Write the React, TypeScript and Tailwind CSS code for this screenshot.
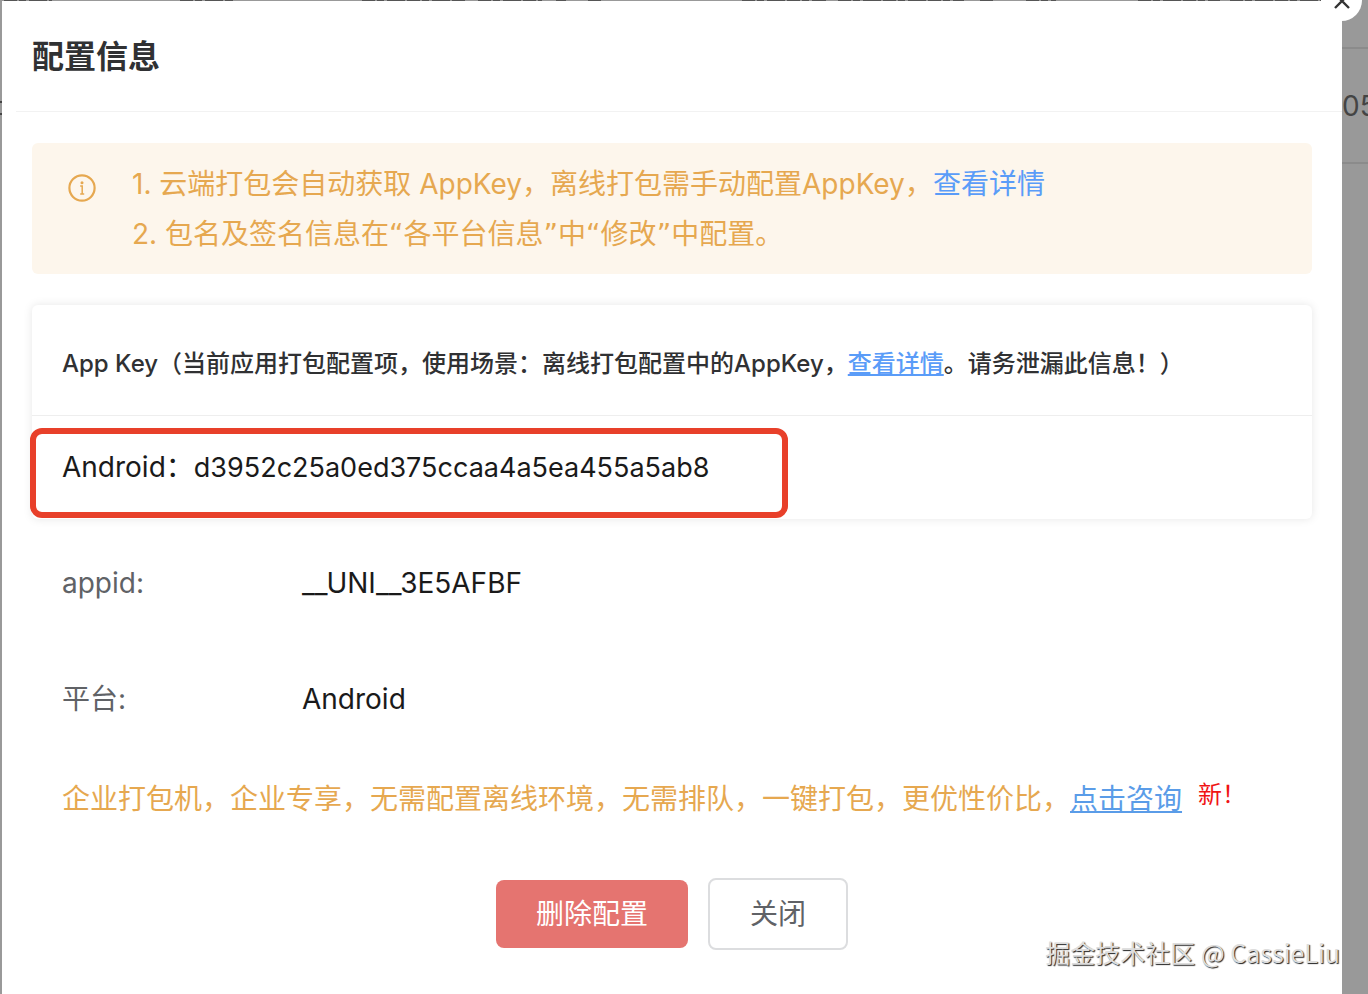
import type { ReactNode } from "react";

interface ChildrenProps {
  children: ReactNode;
}

interface FieldRowProps extends ChildrenProps {
  label: string;
}

const FieldRow = ({ label, children }: FieldRowProps) => (
  <div className="flex h-[116px] items-center px-[30px] text-[28px]">
    <dt className="w-60 shrink-0 text-[#606266]">{label}</dt>
    <dd className="text-[#1a1a1a]">{children}</dd>
  </div>
);

// wider quote marks than the ones in Inter
const Quoted = ({ children }: ChildrenProps) => (
  <>
    <span className="font-['DejaVu_Sans',sans-serif]">“</span>
    {children}
    <span className="font-['DejaVu_Sans',sans-serif]">”</span>
  </>
);

const InfoIcon = () => (
  <svg viewBox="0 0 28 28" className="mt-[15px] size-7 shrink-0" fill="none">
    <circle cx="14" cy="14" r="12.6" stroke="#e6a850" strokeWidth="2.2" />
    <circle cx="14" cy="8.8" r="1.5" fill="#e6a850" />
    <path
      d="M12.2 12H14.2V19.8M12.2 20H16.2"
      stroke="#e6a850"
      strokeWidth="1.5"
    />
  </svg>
);

// bottom edge of the table row that stays visible above the dialog
const Backdrop = () => (
  <svg className="h-px w-full" preserveAspectRatio="none" viewBox="0 0 1368 1">
    <path
      d="M4 .5H52M180 .5H233M362 .5H466M478 .5H542M556 .5H566M588 .5H602M742 .5H826M838 .5H964M980 .5H994M1026 .5H1056M1138 .5H1220M1230 .5H1322"
      stroke="#555"
      strokeDasharray="13 2 7 3 18 2"
    />
  </svg>
);

const App = () => {
  return (
    <div className="relative flex min-h-screen flex-col overflow-hidden bg-[#999] font-['Inter','Noto_Sans_CJK_SC',sans-serif]">
      <Backdrop />
      <div className="flex flex-1">
        <div className="w-0.5 shrink-0 pt-[100px]">
          <div className="h-3.5 border-y-2 border-[#444]" />
        </div>

        <section
          role="dialog"
          aria-labelledby="dialog-title"
          className="relative flex min-w-0 flex-1 flex-col bg-white"
        >
          <header className="ml-3.5 flex h-[111px] items-center border-b border-[#f2f2f2] px-4 pt-0.5">
            <h1
              id="dialog-title"
              className="text-[32px] font-bold text-[#303133]"
            >
              配置信息
            </h1>
          </header>

          <button
            type="button"
            aria-label="关闭弹窗"
            className="absolute -top-[21px] -right-5 flex size-[41px] items-center justify-center rounded-full bg-white"
          >
            <svg
              viewBox="0 0 16 16"
              className="size-4"
              fill="none"
              stroke="#333"
              strokeWidth="2.4"
            >
              <path d="M1 1L15 15M15 1L1 15" />
            </svg>
          </button>

          <main className="px-[30px] pt-[31px]">
            <div className="flex rounded-md bg-[#fdf6ec] pt-4 pr-8 pb-3.5 pl-9 text-[28px] leading-[50px] text-[#e6a850]">
              <InfoIcon />
              <div className="ml-9">
                <p>
                  1. 云端打包会自动获取 AppKey，离线打包需手动配置AppKey，
                  <a href="#appkey" className="text-[#5a9cf8]">
                    查看详情
                  </a>
                </p>
                <p>
                  2. 包名及签名信息在<Quoted>各平台信息</Quoted>中
                  <Quoted>修改</Quoted>中配置。
                </p>
              </div>
            </div>

            <div className="mt-[31px] rounded-md shadow-[0_0_10px_rgba(0,0,0,0.1)]">
              <h2 className="flex h-[111px] items-center border-b border-[#eee] px-[30px] pt-2 text-[24px] font-medium text-[#303133]">
                <span>
                  App Key（当前应用打包配置项，使用场景：离线打包配置中的AppKey，
                  <a href="#appkey" className="text-[#5a9cf8] underline">
                    查看详情
                  </a>
                  。请务泄漏此信息！）
                </span>
              </h2>
              <div className="relative px-[30px] py-[30px] text-[28px] leading-[42px] text-[#1a1a1a]">
                Android：
                <span className="text-[27px]">
                  d3952c25a0ed375ccaa4a5ea455a5ab8
                </span>
                <div className="absolute top-3 -left-0.5 h-[90px] w-[758px] rounded-xl border-6 border-[#e8402a]" />
              </div>
            </div>

            <dl className="mt-1.5">
              <FieldRow label="appid:">__UNI__3E5AFBF</FieldRow>
              <FieldRow label="平台:">Android</FieldRow>
            </dl>

            <p className="px-[30px] pt-[22px] text-[28px] leading-[40px] text-[#e6a850]">
              企业打包机，企业专享，无需配置离线环境，无需排队，一键打包，更优性价比，
              <a href="#consult" className="text-[#5a9ce8] underline">
                点击咨询
              </a>
              <sup className="-top-1.5 ml-4 text-[24px] text-[#f01414]">
                新！
              </sup>
            </p>
          </main>

          <footer className="mt-[59px] flex items-center justify-center gap-5 text-[28px]">
            <button
              type="button"
              className="h-[68px] rounded-lg bg-[#e57470] px-10 text-white"
            >
              删除配置
            </button>
            <button
              type="button"
              className="h-[72px] rounded-lg border-2 border-[#dcdddf] px-10 text-[#606266]"
            >
              关闭
            </button>
          </footer>

          <p className="absolute right-0.5 bottom-[22px] font-['Noto_Sans_CJK_SC',sans-serif] text-[25px] leading-10 text-[#ddd] [text-shadow:1px_1px_1px_#222]">
            掘金技术社区 @ CassieLiu
          </p>
        </section>

        <aside className="w-[26px] shrink-0 overflow-hidden pt-[46px] text-[28px] text-[#444]">
          <div className="flex h-[117px] items-center border-y-2 border-[#8b8b8b]">
            05
          </div>
        </aside>
      </div>
    </div>
  );
};

export default App;
